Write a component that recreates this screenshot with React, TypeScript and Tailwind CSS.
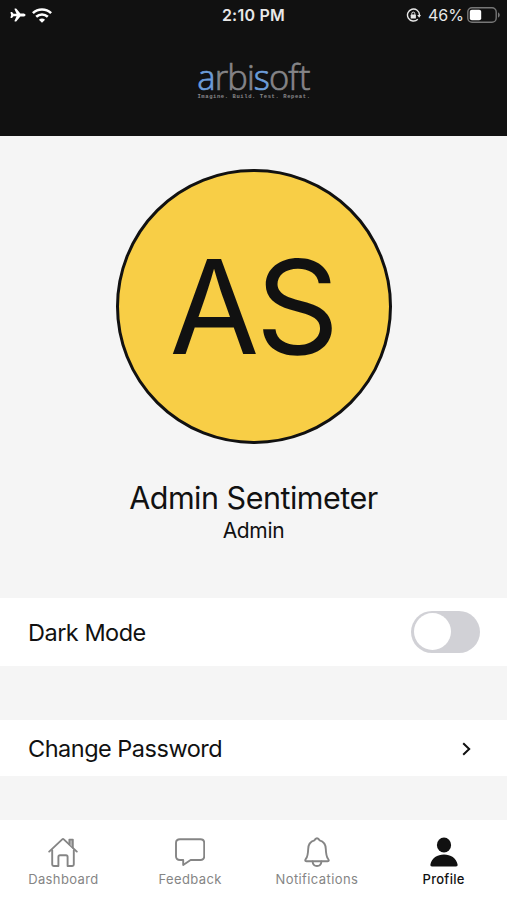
import React from 'react';
import {useState} from "react";
import clsx from "clsx";
import {IoAirplane} from "react-icons/io5";

type tab = {
    name: string;
    icon: React.ReactNode;
    width: string;
}

const tabs: tab[] = [
    {
        name: 'Dashboard',
        width: 'tracking-[0.38px]',
        icon: (
            <g fill="none" stroke="currentColor" strokeWidth="1.9" strokeLinejoin="round" strokeLinecap="round">
                <path d="M4.2 14.2V28.6Q4.2 30 5.7 30H10.4V20.8Q10.4 19.2 12 19.2H18Q19.6 19.2 19.6 20.8V30H24.3Q25.8 30 25.8 28.6V14.2"/>
                <path d="M1.2 15.6L14.2 3.4Q15 2.7 15.8 3.4L28.8 15.6"/>
                <path d="M21.4 8.2V3.6H24.8V11.6" fill="#bbb"/>
            </g>
        ),
    },
    {
        name: 'Feedback',
        width: 'tracking-[0.38px]',
        icon: (
            <path d="M5 3.2H25.5Q29.2 3.2 29.2 6.9V20.3Q29.2 24 25.5 24H15.6L8.2 29V24H5Q1 24 1 20.3V6.9Q1 3.2 5 3.2Z"
                  fill="none" stroke="currentColor" strokeWidth="1.9" strokeLinejoin="round"/>
        ),
    },
    {
        name: 'Notifications',
        width: 'tracking-[0.4px]',
        icon: (
            <g fill="none" stroke="currentColor" strokeWidth="1.9" strokeLinejoin="round" strokeLinecap="round">
                <path d="M15 2.2C13.4 2.2 12.8 3.5 12.4 4.4C8.3 5.5 6.3 9 6.2 13C6 18.5 5.8 20.4 4 22.7C2.8 24.3 3 25.3 4.4 25.3H25.6C27 25.3 27.2 24.3 26 22.7C24.2 20.4 24 18.5 23.8 13C23.7 9 21.7 5.5 17.6 4.4C17.2 3.5 16.6 2.2 15 2.2Z"/>
                <path d="M10.6 25.5C10.8 28.4 12.6 30 15 30S19.2 28.4 19.4 25.5"/>
            </g>
        ),
    },
    {
        name: 'Profile',
        width: 'tracking-[0.3px] font-medium',
        icon: (
            <g fill="currentColor">
                <ellipse cx="15" cy="9" rx="7.1" ry="7.5"/>
                <path d="M3 30.5Q1 30.5 1.4 28.4C2.6 22 8.4 18.4 15 18.4S27.4 22 28.6 28.4Q29 30.5 27 30.5Z"/>
            </g>
        ),
    },
];

const StatusBar = () => {
    return (
        <div className="h-[30px] grid grid-cols-3 items-center text-[#e8e8e8]">
            <div className="flex items-center gap-[6px] pl-[10px]">
                <IoAirplane className="w-[16px] h-[16px] text-white"/>
                <svg className="w-[20px] h-[15px]" viewBox="0 0 20 15" fill="none" stroke="#fff" strokeWidth="2.6">
                    <path d="M.9 5.1C6 .3 14 .3 19.1 5.1"/>
                    <path d="M4.2 8.8C7.6 5.7 12.4 5.7 15.8 8.8"/>
                    <path d="M10 14.7L6.9 11.7Q10 9.2 13.1 11.7Z" fill="#fff" stroke="none"/>
                </svg>
            </div>
            <p className="text-center text-[16px] leading-[30px] font-semibold tracking-[0.25px]">2:10 PM</p>
            <div className="flex items-center justify-end pr-[7px]">
                <svg className="w-[15px] h-[15px] mr-[7px]" viewBox="0 0 15 15" fill="none" stroke="currentColor">
                    <path d="M11.8 11.2A6 6 0 1 1 13.5 7" strokeWidth="1.4"/>
                    <path d="M11.2 7H15L13.2 9.8Z" fill="currentColor" stroke="none"/>
                    <rect x="4.7" y="6.6" width="5.2" height="3.9" rx=".6" fill="currentColor" stroke="none"/>
                    <path d="M5.8 6.8V5.6A1.5 1.5 0 0 1 8.8 5.6V6.8" strokeWidth="1"/>
                </svg>
                <span className="text-[16px] leading-[30px] mr-[3px]">46%</span>
                <svg className="w-[33px] h-[16px]" viewBox="0 0 33 16">
                    <rect x=".8" y=".8" width="28.4" height="14.4" rx="4.2" fill="none" stroke="#777" strokeWidth="1.4"/>
                    <rect x="2.8" y="2.8" width="11.4" height="10.4" rx="2" fill="#fff"/>
                    <path d="M31 5.3Q32.8 6.2 32.8 8T31 10.7Z" fill="#777"/>
                </svg>
            </div>
        </div>
    );
};

const Logo = () => {
    return (
        <div className="mt-[30px] flex flex-col items-center">
            <p className="text-[34.5px] leading-[34px] tracking-[-0.9px] text-[#858588] font-['Open_Sans',sans-serif] font-light [-webkit-text-stroke:0.7px]">
                <span className="text-[#6c9dd9]">a</span>rbi<span className="text-[#6c9dd9]">s</span>o<span className="tracking-[0.3px]">f</span>t
            </p>
            <p className="ml-px text-[5.5px] leading-[6px] tracking-[0.6px] font-bold whitespace-nowrap text-[#88888a] font-['Liberation_Mono',monospace]">
                Imagine. Build. Test. Repeat.
            </p>
        </div>
    );
};

const App = () => {

    const [darkMode, setDarkMode] = useState(false);
    const [active, setActive] = useState('Profile');

    return (
        <div className="w-[507px] h-[900px] flex flex-col overflow-hidden bg-[#f5f5f5] text-[#111] font-['Inter','Liberation_Sans',sans-serif]">
            <header className="h-[135.5px] shrink-0 bg-[#111]">
                <StatusBar/>
                <Logo/>
            </header>

            <section className="h-[462px] shrink-0 flex flex-col items-center pt-[33.5px]">
                <div className="w-[276px] h-[275px] ml-px rounded-full border-3 border-[#111] bg-[#f8ce46] flex justify-center items-center">
                    <span className="text-[130px] leading-none tracking-[-3.5px] mr-[3px] mt-[1px]">AS</span>
                </div>
                <h1 className="mt-[34px] text-[30.5px] leading-[40px] tracking-[-0.5px]">Admin Sentimeter</h1>
                <p className="text-[21px] leading-[25px] tracking-[-0.3px]">Admin</p>
            </section>

            <div className="h-[68.5px] shrink-0 bg-white flex items-center justify-between pl-7 pr-[27px]">
                <span className="text-[23.5px] tracking-[-0.5px] pt-px">Dark Mode</span>
                <button className={clsx("w-[69px] h-[42px] rounded-full p-[2.5px] flex items-center", darkMode ? "bg-[#34c759] justify-end" : "bg-[#d1d1d6]")}
                        onClick={() => setDarkMode(!darkMode)}>
                    <span className="w-[37px] h-[37px] rounded-full bg-white"/>
                </button>
            </div>

            <div className="mt-[54px] h-[56px] shrink-0 bg-white flex items-center justify-between pl-7 pr-[36px]">
                <span className="text-[23.5px] tracking-[-0.5px] pt-[2px]">Change Password</span>
                <svg className="w-[9px] h-[14px] mt-[2px]" viewBox="0 0 9 14" fill="none" stroke="currentColor" strokeWidth="2">
                    <path d="M1.2 1.2L7.2 7L1.2 12.8"/>
                </svg>
            </div>

            <nav className="mt-[44px] h-[80px] shrink-0 bg-white grid grid-cols-4">
                {tabs.map((item) => (
                    <button key={item.name} onClick={() => setActive(item.name)}
                            className={clsx("flex flex-col items-center pt-[16px]", active === item.name ? "text-[#111]" : "text-[#858585]")}>
                        <svg className="w-[30px] h-[32px]" viewBox="0 0 30 32">{item.icon}</svg>
                        <span className={clsx("mt-[2px] text-[13px] leading-[18px]", item.width)}>{item.name}</span>
                    </button>
                ))}
            </nav>
        </div>
    );
};

export default App;
